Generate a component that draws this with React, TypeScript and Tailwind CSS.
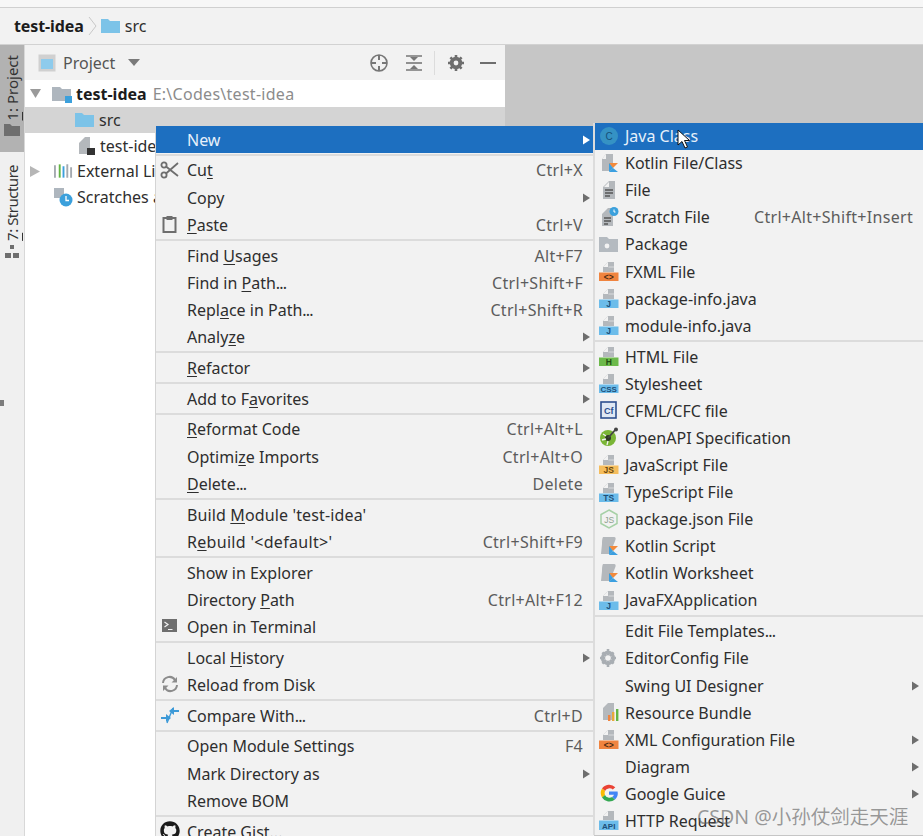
import type { ReactNode } from "react";
import { FaGithub } from "react-icons/fa";

const font = "font-['Noto_Sans','Noto_Sans_CJK_SC',sans-serif]";

function U({ children }: { children: ReactNode }) {
  return <span className="underline underline-offset-2">{children}</span>;
}

// the three dots sit tighter in the original font
function Dots() {
  return <span className="tracking-[-0.8px]">...</span>;
}

function Arrow({ white }: { white?: boolean }) {
  return (
    <svg width="9" height="11" viewBox="0 0 9 11" className="absolute right-[3px] top-1/2 -translate-y-1/2">
      <path d="M1 1 L8 5.5 L1 10 Z" fill={white ? "#ffffff" : "#6e6e6e"} />
    </svg>
  );
}

function Box({ children }: { children: ReactNode }) {
  return (
    <svg width="20" height="20" viewBox="0 0 20 20">
      {children}
    </svg>
  );
}

// grey dog-eared page stub that sits above a coloured band
function FileBand({ color, label, ink = "#3a3a3a" }: { color: string; label: string; ink?: string }) {
  return (
    <Box>
      <path d="M4 6 L9 1 L15 1 L15 11 L4 11 Z" fill="#b4b8bc" />
      <path d="M9 6 L9 1 L4 6 Z" fill="#f2f2f2" />
      <path d="M9.5 6 H15" stroke="#f2f2f2" strokeWidth="0.6" />
      <rect x="0" y="11.5" width="19.5" height="8.5" fill={color} />
      <text x="9.7" y="18.7" textAnchor="middle" fontSize="8.5" fontWeight="700" fill={ink} fontFamily="Liberation Sans">
        {label}
      </text>
    </Box>
  );
}

function KotlinMark() {
  return (
    <>
      <path d="M10 10 L19 10 L14 15 Z" fill="#f28a3c" />
      <path d="M10 10 L14 15 L10 19 Z" fill="#3b9fe0" />
      <path d="M14 15 L19 19 L10 19 Z" fill="#3b9fe0" />
    </>
  );
}

const icons: Record<string, ReactNode> = {
  java: (
    <Box>
      <circle cx="10" cy="10" r="9" fill="#3592c4" />
      <text x="6.4" y="13.6" fontSize="10" fill="#16507a" fontFamily="Liberation Sans">C</text>
    </Box>
  ),
  kotlinFile: (
    <Box>
      <path d="M3 6 L7 1 L14 1 L14 18 L3 18 Z" fill="#b4b8bc" />
      <path d="M3 6 L7 6 L7 1 Z" fill="#f2f2f2" />
      <KotlinMark />
    </Box>
  ),
  file: (
    <Box>
      <path d="M4 7 L10 1 L16 1 L16 19 L4 19 Z" fill="#b4b8bc" />
      <path d="M5 7 L10 7 L10 2 Z" fill="#f2f2f2" />
      <path d="M6 10 H14 M6 13 H14 M6 16 H11" stroke="#555" strokeWidth="1.3" />
    </Box>
  ),
  scratch: (
    <Box>
      <path d="M3 7 L9 1 L14 1 L14 19 L3 19 Z" fill="#b4b8bc" />
      <path d="M5 11 H12 M5 14 H12 M5 17 H9" stroke="#555" strokeWidth="1.3" />
      <circle cx="15" cy="4.5" r="4.5" fill="#3ba0dc" />
      <path d="M15 2.5 V5 H16.5" stroke="#fff" strokeWidth="1" fill="none" />
    </Box>
  ),
  pkg: (
    <Box>
      <path d="M0 3 H8 L10 5 H19 V18 H0 Z" fill="#b4bac0" />
      <circle cx="8" cy="12" r="2.4" fill="#f2f2f2" />
    </Box>
  ),
  fxml: <FileBand color="#f0843f" label="<>" ink="#4a2a12" />,
  java2: <FileBand color="#6cbcea" label="J" ink="#1d4f78" />,
  html: <FileBand color="#6cb94a" label="H" ink="#1f4d12" />,
  css: (
    <Box>
      <path d="M4 6 L9 1 L15 1 L15 11 L4 11 Z" fill="#b4b8bc" />
      <path d="M9 6 L9 1 L4 6 Z" fill="#f2f2f2" />
      <rect x="0" y="11.5" width="19.5" height="8.5" fill="#6cbcea" />
      <text x="9.7" y="18.8" textAnchor="middle" fontSize="8" fontWeight="700" fill="#1d4f78" fontFamily="Liberation Sans">CSS</text>
    </Box>
  ),
  cfml: (
    <Box>
      <rect x="2" y="2" width="15" height="16" fill="#dfe8f4" stroke="#2d4f8f" strokeWidth="1.6" />
      <text x="5" y="14" fontSize="9" fontWeight="700" fill="#2d4f8f" fontFamily="Liberation Sans">Cf</text>
    </Box>
  ),
  openapi: (
    <Box>
      <circle cx="9" cy="11" r="8" fill="#7ab536" />
      <circle cx="9" cy="11" r="3" fill="#2f3b22" />
      <path d="M4 7 L7 9 M3 13 L7 12 M8 18 L9 14" stroke="#f2f2f2" strokeWidth="1.3" />
      <path d="M9 11 L17 2" stroke="#444" strokeWidth="1.8" />
      <circle cx="17" cy="2.5" r="2" fill="#444" />
    </Box>
  ),
  js: <FileBand color="#f5bd5c" label="JS" ink="#6b4a10" />,
  ts: <FileBand color="#6cbcea" label="TS" ink="#1d4f78" />,
  nodejs: (
    <Box>
      <path d="M10 1 L18 5.5 V14.5 L10 19 L2 14.5 V5.5 Z" fill="none" stroke="#a6d0a6" strokeWidth="1.5" />
      <text x="5.2" y="13.5" fontSize="8.5" fill="#8fa08f" fontFamily="Liberation Sans">JS</text>
    </Box>
  ),
  kotlinScript: (
    <Box>
      <path d="M4 1 H15 C17 1 17 3 16 5 L14 10 L13 18 H2 L3 8 C3 5 3 3 4 1 Z" fill="#b4b8bc" />
      <KotlinMark />
    </Box>
  ),
  gear: (
    <Box>
      <circle cx="9" cy="10" r="5.5" fill="none" stroke="#a9aeb3" strokeWidth="3.4" />
      <path d="M9 1 V19 M1 10 H17 M3.4 4.4 L14.6 15.6 M14.6 4.4 L3.4 15.6" stroke="#a9aeb3" strokeWidth="2.6" />
      <circle cx="9" cy="10" r="2.8" fill="#f2f2f2" />
    </Box>
  ),
  bundle: (
    <Box>
      <path d="M4 6 L9 1 L15 1 L15 18 L4 18 Z" fill="#b4b8bc" />
      <rect x="9" y="13" width="2.4" height="6" fill="#f0843f" />
      <rect x="13" y="10" width="2.4" height="9" fill="#e8a83a" />
      <rect x="17" y="7" width="2.4" height="12" fill="#62b543" />
    </Box>
  ),
  google: (
    <Box>
      <path d="M16.3 4.2 A8.6 8.6 0 0 0 3 5.6 L6 8 A5 5 0 0 1 13.8 6.6 Z" fill="#ea4335" />
      <path d="M3 5.6 A8.6 8.6 0 0 0 3 14.4 L6 12 A5 5 0 0 1 6 8 Z" fill="#fbbc05" />
      <path d="M3 14.4 A8.6 8.6 0 0 0 16 16.4 L13.2 14 A5 5 0 0 1 6 12 Z" fill="#34a853" />
      <path d="M16 16.4 A8.6 8.6 0 0 0 18.6 8.4 H10 V11.8 H15 A5 5 0 0 1 13.2 14 Z" fill="#4285f4" />
    </Box>
  ),
  api: (
    <Box>
      <path d="M4 6 L9 1 L15 1 L15 10 L4 10 Z" fill="#b4b8bc" />
      <path d="M9 6 L9 1 L4 6 Z" fill="#f2f2f2" />
      <rect x="0" y="10.5" width="19.5" height="9.5" fill="#6cbcea" />
      <text x="9.7" y="18.6" textAnchor="middle" fontSize="8" fontWeight="700" fill="#1d4f78" fontFamily="Liberation Sans">API</text>
    </Box>
  ),
  cut: (
    <Box>
      <circle cx="4" cy="5" r="2.6" fill="none" stroke="#6e6e6e" strokeWidth="1.8" />
      <circle cx="4" cy="15" r="2.6" fill="none" stroke="#6e6e6e" strokeWidth="1.8" />
      <path d="M6 6.5 L18 16 M6 13.5 L18 3" stroke="#6e6e6e" strokeWidth="1.8" />
    </Box>
  ),
  paste: (
    <Box>
      <rect x="3.5" y="4" width="12" height="14" fill="#f2f2f2" stroke="#6e6e6e" strokeWidth="2" />
      <rect x="6.5" y="2" width="6" height="4" fill="#6e6e6e" />
    </Box>
  ),
  terminal: (
    <Box>
      <rect x="2" y="3" width="15" height="13" fill="#6e6e6e" />
      <path d="M4.5 6 L8 8.5 L4.5 11 M8 13.5 H12.5" stroke="#f2f2f2" strokeWidth="1.2" fill="none" />
    </Box>
  ),
  reload: (
    <Box>
      <path d="M3 9 A6.5 6.5 0 0 1 15 6" fill="none" stroke="#8c8c8c" strokeWidth="2" />
      <path d="M17 11 A6.5 6.5 0 0 1 5 14" fill="none" stroke="#8c8c8c" strokeWidth="2" />
      <path d="M17 3 V8.5 H11.5 Z M3 17 V11.5 H8.5 Z" fill="#8c8c8c" />
    </Box>
  ),
  compare: (
    <Box>
      <path d="M1 13 H7 M12 6 H19" stroke="#3d9ad8" strokeWidth="2.2" />
      <path d="M6 9 L11 13 L6 17 Z M14 2 L9 6 L14 10 Z" fill="#3d9ad8" />
      <path d="M7 18 L13 3" stroke="#3d9ad8" strokeWidth="1.4" />
    </Box>
  ),
  github: <FaGithub size={20} color="#1a1a1a" />,
};

type Row = {
  kind?: "sep";
  label?: ReactNode;
  icon?: string;
  keys?: string;
  sub?: boolean;
  active?: boolean;
};

const sep: Row = { kind: "sep" };

const mainRows: Row[] = [
  { label: "New", sub: true, active: true },
  sep,
  { label: <>Cu<U>t</U></>, icon: "cut", keys: "Ctrl+X" },
  { label: "Copy", sub: true },
  { label: <><U>P</U>aste</>, icon: "paste", keys: "Ctrl+V" },
  sep,
  { label: <>Find <U>U</U>sages</>, keys: "Alt+F7" },
  { label: <>Find in <U>P</U>ath<Dots /></>, keys: "Ctrl+Shift+F" },
  { label: <>Repl<U>a</U>ce in Path<Dots /></>, keys: "Ctrl+Shift+R" },
  { label: <>Analy<U>z</U>e</>, sub: true },
  sep,
  { label: <><U>R</U>efactor</>, sub: true },
  sep,
  { label: <>Add to F<U>a</U>vorites</>, sub: true },
  sep,
  { label: <><U>R</U>eformat Code</>, keys: "Ctrl+Alt+L" },
  { label: <>Optimi<U>z</U>e Imports</>, keys: "Ctrl+Alt+O" },
  { label: <><U>D</U>elete<Dots /></>, keys: "Delete" },
  sep,
  { label: <span className="tracking-[0.13px]">Build <U>M</U>odule 'test-idea'</span> },
  { label: <span className="tracking-[0.3px]">R<U>e</U>build '&lt;default&gt;'</span>, keys: "Ctrl+Shift+F9" },
  sep,
  { label: "Show in Explorer" },
  { label: <>Directory <U>P</U>ath</>, keys: "Ctrl+Alt+F12" },
  { label: "Open in Terminal", icon: "terminal" },
  sep,
  { label: <>Local <U>H</U>istory</>, sub: true },
  { label: "Reload from Disk", icon: "reload" },
  sep,
  { label: <>Compare With<Dots /></>, icon: "compare", keys: "Ctrl+D" },
  sep,
  { label: "Open Module Settings", keys: "F4" },
  { label: "Mark Directory as", sub: true },
  { label: "Remove BOM" },
  sep,
  { label: "Create Gist...", icon: "github" },
];

const subRows: Row[] = [
  { label: "Java Class", icon: "java", active: true },
  { label: "Kotlin File/Class", icon: "kotlinFile" },
  { label: "File", icon: "file" },
  { label: "Scratch File", icon: "scratch", keys: "Ctrl+Alt+Shift+Insert" },
  { label: "Package", icon: "pkg" },
  { label: "FXML File", icon: "fxml" },
  { label: "package-info.java", icon: "java2" },
  { label: "module-info.java", icon: "java2" },
  sep,
  { label: "HTML File", icon: "html" },
  { label: "Stylesheet", icon: "css" },
  { label: "CFML/CFC file", icon: "cfml" },
  { label: "OpenAPI Specification", icon: "openapi" },
  { label: "JavaScript File", icon: "js" },
  { label: "TypeScript File", icon: "ts" },
  { label: "package.json File", icon: "nodejs" },
  { label: "Kotlin Script", icon: "kotlinScript" },
  { label: "Kotlin Worksheet", icon: "kotlinScript" },
  { label: "JavaFXApplication", icon: "java2" },
  sep,
  { label: <>Edit File Templates<Dots /></> },
  { label: "EditorConfig File", icon: "gear" },
  { label: "Swing UI Designer", sub: true },
  { label: "Resource Bundle", icon: "bundle" },
  { label: "XML Configuration File", icon: "fxml", sub: true },
  { label: "Diagram", sub: true },
  { label: "Google Guice", icon: "google", sub: true },
  { label: "HTTP Request", icon: "api" },
];

function MenuRow({ row, textLeft, keysRight }: { row: Row; textLeft: string; keysRight: string }) {
  if (row.kind === "sep") {
    return (
      <div className="h-[3.8px] flex items-center">
        <div className="h-[2px] w-full bg-[#dcdcdc]" />
      </div>
    );
  }
  return (
    <div
      className={`relative flex h-[27.1px] shrink-0 items-center ${textLeft} whitespace-nowrap ${
        row.active ? "bg-[#1d6fc0] text-[#e6f0fa]" : "text-[#2e2e2e]"
      }`}
    >
      {row.icon && <span className="absolute left-[4px] top-[3px] flex">{icons[row.icon]}</span>}
      <span>{row.label}</span>
      {row.keys && <span className={`absolute ${keysRight} tracking-[0.3px] text-[#5c5c5c]`}>{row.keys}</span>}
      {row.sub && <Arrow white={row.active} />}
    </div>
  );
}

function TreeRow({
  indent,
  children,
  selected,
}: {
  indent: string;
  children: ReactNode;
  selected?: boolean;
}) {
  return (
    <div className={`flex h-[25.7px] items-center gap-[4px] whitespace-nowrap ${indent} ${selected ? "bg-[#d4d4d4]" : ""}`}>
      {children}
    </div>
  );
}

function Folder({ w = 19, h = 14 }: { w?: number; h?: number }) {
  return (
    <svg width={w} height={h} viewBox="0 0 19 14">
      <path d="M0 0 H7 L9 2 H19 V14 H0 Z" fill="#7cc3e8" />
    </svg>
  );
}

export default function App() {
  return (
    <div className={`${font} relative h-[836px] w-[923px] overflow-hidden bg-[#f2f2f2] text-[16px] leading-none text-[#2e2e2e]`}>
      {/* window top edge */}
      <div className="h-[8px] border-b border-[#d0d0d0] bg-[#f7f7f7]" />

      {/* breadcrumb */}
      <div className="flex h-[37px] items-center border-b border-[#d2d2d2] pl-[14px]">
        <span className="font-bold tracking-[-0.1px] text-[#1c1c1c]">test-idea</span>
        <svg width="10" height="20" viewBox="0 0 10 20" className="ml-[4px] mr-[3px]">
          <path d="M1 1 L8 10 L1 19" fill="none" stroke="#c8c8c8" strokeWidth="1" />
        </svg>
        <Folder />
        <span className="ml-[5px]">src</span>
      </div>

      <div className="flex h-[791px]">
        {/* left tool strip */}
        <div className="flex w-[25px] shrink-0 flex-col border-r border-[#d8d8d8] bg-[#f0f0f0]">
          <div className="flex h-[107px] flex-col items-center bg-[#b2b2b2] pt-[10px]">
            <span className="text-[15px] text-[#333] [writing-mode:vertical-rl] rotate-180">
              <U>1</U>: Project
            </span>
            <svg width="16" height="12" viewBox="0 0 16 12" className="mt-[3px]">
              <path d="M0 0 H6 L8 2 H16 V12 H0 Z" fill="#6e6e6e" />
            </svg>
          </div>
          <div className="flex flex-col items-center pt-[13px]">
            <span className="text-[15px] tracking-[-0.5px] text-[#333] [writing-mode:vertical-rl] rotate-180">
              <U>7</U>: Structure
            </span>
            <svg width="14" height="14" viewBox="0 0 14 14" className="mt-[4px]">
              <path d="M5 0 H9 V4 H5 Z M0 8 H6 V13 H0 Z M8 8 H14 V13 H8 Z" fill="#6e6e6e" />
            </svg>
          </div>
        </div>

        {/* project panel */}
        <div className="flex w-[480px] shrink-0 flex-col bg-white">
          <div className="flex h-[35px] shrink-0 items-center bg-[#f2f2f2] pl-[13px]">
            <svg width="18" height="18" viewBox="0 0 18 18">
              <rect x="0.5" y="0.5" width="17" height="17" fill="#d0d0d0" />
              <rect x="3" y="5" width="12" height="10" fill="#8ecbec" />
            </svg>
            <span className="ml-[7px] text-[#555]">Project</span>
            <svg width="12" height="8" viewBox="0 0 12 8" className="ml-[13px]">
              <path d="M0 0 H12 L6 7 Z" fill="#7a7a7a" />
            </svg>
            <svg width="20" height="20" viewBox="0 0 20 20" className="ml-[229px]">
              <circle cx="10" cy="10" r="8" fill="none" stroke="#777" strokeWidth="1.6" />
              <path d="M10 2 V7 M10 13 V18 M2 10 H7 M13 10 H18" stroke="#777" strokeWidth="2" />
            </svg>
            <svg width="18" height="20" viewBox="0 0 18 20" className="ml-[16px]">
              <path d="M1 10 H17" stroke="#777" strokeWidth="1.6" />
              <path d="M1 3 H17 M1 17 H17" stroke="#777" strokeWidth="1.4" />
              <path d="M5 4 H13 L9 8 Z M5 16 H13 L9 12 Z" fill="#777" />
            </svg>
            <div className="ml-[11px] h-[24px] w-px bg-[#dcdcdc]" />
            <svg width="18" height="18" viewBox="0 0 18 18" className="ml-[12px]">
              <circle cx="9" cy="9" r="4.6" fill="none" stroke="#6e6e6e" strokeWidth="3.2" />
              <path d="M9 1 V17 M1 9 H17 M3.4 3.4 L14.6 14.6 M14.6 3.4 L3.4 14.6" stroke="#6e6e6e" strokeWidth="2.6" />
              <circle cx="9" cy="9" r="2.4" fill="#f2f2f2" />
            </svg>
            <div className="ml-[15px] h-[2px] w-[16px] bg-[#6e6e6e]" />
          </div>

          <div className="flex h-[27px] items-center gap-[3px] whitespace-nowrap pl-[4px]">
            <svg width="13" height="11" viewBox="0 0 13 11" className="mr-[7px]">
              <path d="M1 1 H12 L6.5 10 Z" fill="#9a9a9a" />
            </svg>
            <svg width="20" height="20" viewBox="0 0 20 20" className="mr-[1px]">
              <path d="M0 3 H8 L10 5 H19 V17 H0 Z" fill="#aeb6be" />
              <rect x="13" y="12" width="7" height="7" fill="#3ba0dc" />
            </svg>
            <span className="font-bold text-[#1c1c1c]">test-idea</span>
            <span className="ml-[3px] tracking-[0.28px] text-[#8c8c8c]">E:\Codes\test-idea</span>
          </div>
          <TreeRow indent="pl-[50px] gap-[5px]" selected>
            <Folder />
            <span>src</span>
          </TreeRow>
          <TreeRow indent="pl-[53px]">
            <svg width="18" height="20" viewBox="0 0 18 20">
              <path d="M1 7 L7 1 L12 1 L12 18 L1 18 Z" fill="#b4b8bc" />
              <rect x="9" y="12" width="8" height="7" fill="#333" />
            </svg>
            <span>test-idea.iml</span>
          </TreeRow>
          <TreeRow indent="pl-[4px]">
            <svg width="13" height="13" viewBox="0 0 13 13" className="mr-[8px]">
              <path d="M1 1 L11 6.5 L1 12 Z" fill="#b6b6b6" />
            </svg>
            <svg width="19" height="16" viewBox="0 0 20 16">
              <path d="M1 2 V15" stroke="#a4aab0" strokeWidth="2" />
              <path d="M6 1 V15" stroke="#62b543" strokeWidth="2" />
              <path d="M10 3 V15" stroke="#3ba0dc" strokeWidth="2" />
              <path d="M14 1 V15 M18 4 V15" stroke="#a4aab0" strokeWidth="2" />
            </svg>
            <span>External Libraries</span>
          </TreeRow>
          <TreeRow indent="pl-[28px] gap-[3px]">
            <svg width="20" height="20" viewBox="0 0 20 20">
              <path d="M1 1 H11 V11 H1 Z" fill="#aeb6be" />
              <circle cx="13" cy="13" r="6.5" fill="#3ba0dc" />
              <path d="M13 9 V13.5 H16" stroke="#fff" strokeWidth="1.3" fill="none" />
            </svg>
            <span>Scratches and Consoles</span>
          </TreeRow>
        </div>

        {/* editor area behind the menus */}
        <div className="flex-1 bg-[#c6c6c6]" />
      </div>

      {/* resize handles from the capture */}
      <div className="absolute left-0 top-[400px] h-[6px] w-[4px] bg-[#7c7c7c]" />
      <div className="absolute left-[919px] top-[400px] h-[6px] w-[4px] bg-[#7c7c7c]" />
      <div className="absolute left-[459px] top-[832px] h-[4px] w-[6px] bg-[#7c7c7c]" />

      {/* main context menu */}
      <div className="absolute left-[155px] top-[126px] w-[439px] border-l border-[#d4d4d4] bg-[#f2f2f2]">
        {mainRows.map((row, i) => (
          <MenuRow key={i} row={row} textLeft="pl-[31px]" keysRight="right-[11px]" />
        ))}
      </div>

      {/* New submenu */}
      <div className="absolute left-[593px] top-[122.5px] w-[330px] border-l-2 border-[#dcdcdc] bg-[#f2f2f2]">
        {subRows.map((row, i) => (
          <MenuRow key={i} row={row} textLeft="pl-[30px]" keysRight="right-[10px]" />
        ))}
      </div>

      {/* mouse pointer */}
      <svg width="14" height="20" viewBox="0 0 14 20" className="absolute left-[677px] top-[129px]">
        <path d="M1 1 L1 16 L5 12.5 L8 19 L10.5 18 L7.5 11.5 L12.5 11.5 Z" fill="#ffffff" stroke="#111" strokeWidth="1" />
      </svg>

      {/* video watermark */}
      <div className="absolute left-[697px] top-[807px] whitespace-nowrap text-[19.5px] leading-[20px] text-[#5a5a5a]/60">
        CSDN @小孙仗剑走天涯
      </div>
    </div>
  );
}
